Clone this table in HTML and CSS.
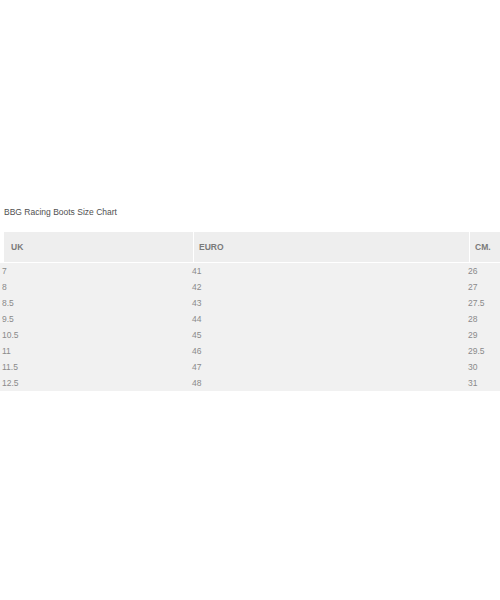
FILE: index.html
```html
<!DOCTYPE html>
<html>
<head>
<meta charset="utf-8">
<link rel="stylesheet" href="styles.css">
</head>
<body>
<div class="title">BBG Racing Boots Size Chart</div>
<div class="chart">
  <div class="head">
    <div class="hcell first">UK</div>
    <div class="hcell">EURO</div>
    <div class="hcell">CM.</div>
  </div>
  <div class="rows">
    <div class="row"><span class="c1">7</span><span>41</span><span>26</span></div>
    <div class="row"><span class="c1">8</span><span>42</span><span>27</span></div>
    <div class="row"><span class="c1">8.5</span><span>43</span><span>27.5</span></div>
    <div class="row"><span class="c1">9.5</span><span>44</span><span>28</span></div>
    <div class="row"><span class="c1">10.5</span><span>45</span><span>29</span></div>
    <div class="row"><span class="c1">11</span><span>46</span><span>29.5</span></div>
    <div class="row"><span class="c1">11.5</span><span>47</span><span>30</span></div>
    <div class="row"><span class="c1">12.5</span><span>48</span><span>31</span></div>
  </div>
</div>
</body>
</html>
```
FILE: styles.css
```css
html, body {
  margin: 0;
  padding: 0;
  background: #fff;
}
body {
  font-family: "Liberation Sans", Arial, sans-serif;
  color: #777;
}
.title {
  margin: 206px 0 0 4px;
  font-size: 8.5px;
  line-height: 12px;
  color: #505050;
}
.chart {
  margin-top: 14px;
}
.head {
  display: grid;
  grid-template-columns: 189px 276px 1fr;
  margin-left: 4px;
  height: 30px;
  background: #eeeeee;
  border-bottom: 1px solid #fff;
}
.hcell {
  font-size: 8.5px;
  line-height: 30px;
  padding-left: 5px;
  border-left: 1px solid #fff;
  color: #7a7a7a;
  font-weight: bold;
}
.hcell.first {
  padding-left: 7px;
  border-left: none;
}
.rows {
  background: #f1f1f1;
}
.row {
  display: grid;
  grid-template-columns: 192px 276px 1fr;
  height: 16px;
  line-height: 16px;
  font-size: 8.5px;
  color: #8a8a8a;
}
.c1 {
  padding-left: 2px;
}
```
